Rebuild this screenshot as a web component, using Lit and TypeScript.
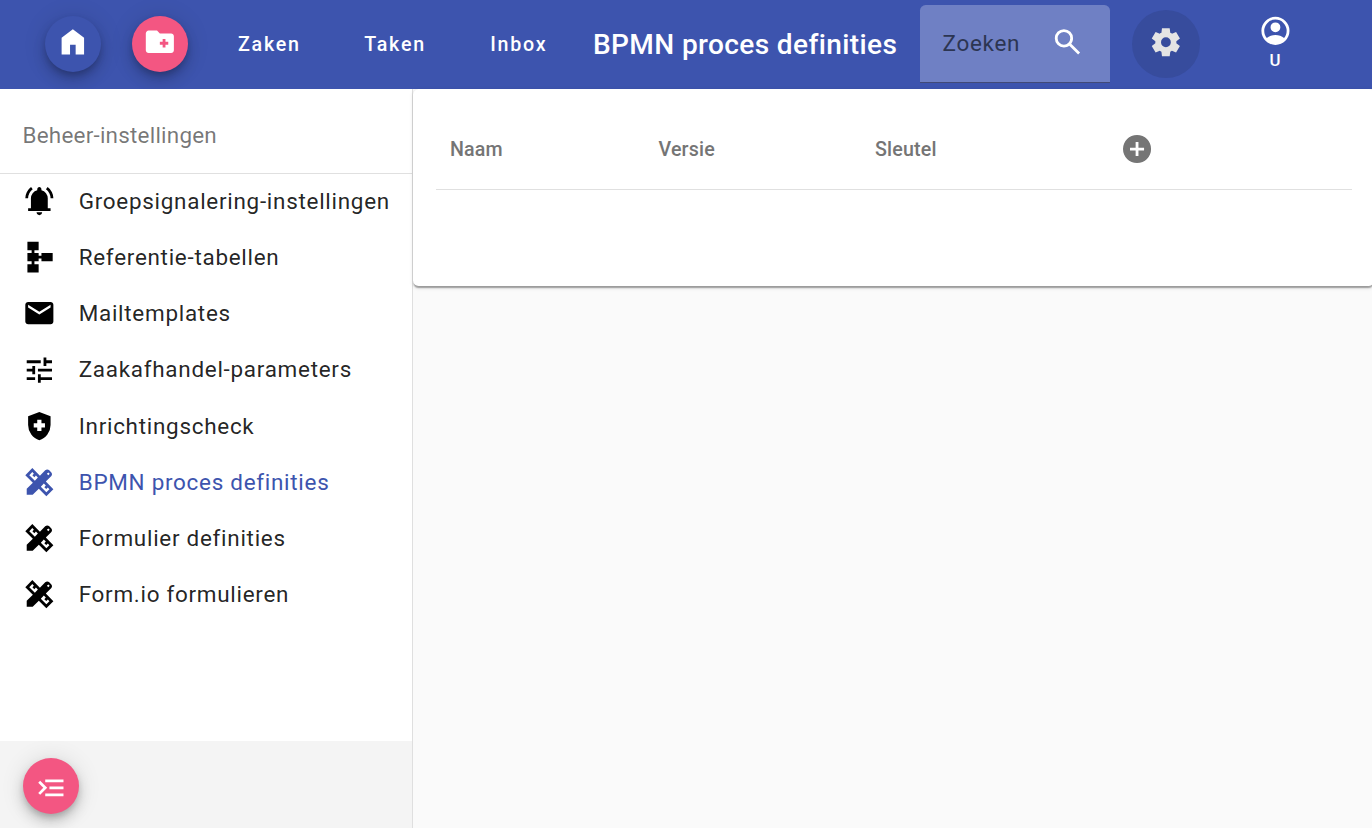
import { LitElement, html, css, svg } from "lit";
import { customElement, property } from "lit/decorators.js";

const ICONS: Record<string, string> = {
  home: "M160-120v-480l320-240 320 240v480H560v-280H400v280H160Z",
  folder:
    "M160-160q-33 0-56.5-23.5T80-240v-480q0-33 23.5-56.5T160-800h240l80 80h320q33 0 56.5 23.5T880-640v400q0 33-23.5 56.5T800-160H160Zm400-160h80v-80h80v-80h-80v-80h-80v80h-80v80h80v80Z",
  search:
    "M784-120 532-372q-30 24-69 38t-83 14q-109 0-184.5-75.5T120-580q0-109 75.5-184.5T380-840q109 0 184.5 75.5T640-580q0 44-14 83t-38 69l252 252-56 56ZM380-400q75 0 127.5-52.5T560-580q0-75-52.5-127.5T380-760q-75 0-127.5 52.5T200-580q0 75 52.5 127.5T380-400Z",
  settings:
    "m370-80-16-128q-13-5-24.5-12T307-235l-119 50L78-375l103-78q-1-7-1-13.5v-27q0-6.5 1-13.5L78-585l110-190 119 50q11-8 23-15t24-12l16-128h220l16 128q13 5 24.5 12t22.5 15l119-50 110 190-103 78q1 7 1 13.5v27q0 6.5-2 13.5l103 78-110 190-118-50q-11 8-23 15t-24 12L590-80H370Zm112-260q58 0 99-41t41-99q0-58-41-99t-99-41q-59 0-99.5 41T342-480q0 58 40.5 99t99.5 41Z",
  account:
    "M234-276q51-39 114-61.5T480-360q69 0 132 22.5T726-276q35-41 54.5-93T800-480q0-133-93.5-226.5T480-800q-133 0-226.5 93.5T160-480q0 59 19.5 111t54.5 93Zm246-164q-59 0-99.5-40.5T340-580q0-59 40.5-99.5T480-720q59 0 99.5 40.5T620-580q0 59-40.5 99.5T480-440Zm0 360q-83 0-156-31.5T197-197q-54-54-85.5-127T80-480q0-83 31.5-156T197-763q54-54 127-85.5T480-880q83 0 156 31.5T763-763q54 54 85.5 127T880-480q0 83-31.5 156T763-197q-54 54-127 85.5T480-80Z",
  bell:
    "M80-560q0-100 44.5-183.5T244-882l47 64q-60 44-95.5 111T160-560H80Zm720 0q0-80-35.5-147T669-818l47-64q75 55 119.5 138.5T880-560h-80ZM160-200v-80h80v-280q0-83 50-147.5T420-792v-28q0-25 17.5-42.5T480-880q25 0 42.5 17.5T540-820v28q80 20 130 84.5T720-560v280h80v80H160ZM480-80q-33 0-56.5-23.5T400-160h160q0 33-23.5 56.5T480-80Z",
  schema:
    "M140-40v-240h120v-80H140v-240h120v-80H140v-240h320v240H340v80h120v80h80v-80h320v240H540v-80h-80v80H340v80h120v240H140Z",
  mail:
    "M160-160q-33 0-56.5-23.5T80-240v-480q0-33 23.5-56.5T160-800h640q33 0 56.5 23.5T880-720v480q0 33-23.5 56.5T800-160H160Zm320-280 320-200v-80L480-520 160-720v80l320 200Z",
  tune:
    "M440-120v-240h80v80h320v80H520v80h-80Zm-320-80v-80h240v80H120Zm160-160v-80H120v-80h160v-80h80v240h-80Zm160-80v-80h400v80H440Zm160-160v-240h80v80h160v80H680v80h-80Zm-480-80v-80h400v80H120Z",
  shield:
    "M420-340h120v-100h100v-120H540v-100H420v100H320v120h100v100Zm60 260q-139-35-229.5-159.5T160-516v-244l320-120 320 120v244q0 152-90.5 276.5T480-80Z",
  design:
    "m352-522 86-87-56-57-44 44-56-56 43-44-45-45-87 87 159 158Zm328 329 87-87-45-45-44 43-56-56 43-44-57-56-86 86 158 159ZM735-678l40-40-40-40-40 40 40 40ZM290-120H120v-170l175-175L80-680l200-200 216 216 151-152q12-12 27-18t31-6q16 0 31 6t27 18l53 54q12 12 18 27t6 31q0 16-6 30.5T816-647L665-495l215 215L680-80 465-295 290-120Z",
  expand:
    "M840-720v80H320v-80h520Zm-664 40 200 200-200 200-56-56 144-144-144-144 56-56Zm664 160v80H440v-80h400Zm0 200v80H320v-80h520Z",
  add:
    "M440-280h80v-160h160v-80H520v-160h-80v160H280v80h160v160Zm40 200q-83 0-156-31.5T197-197q-54-54-85.5-127T80-480q0-83 31.5-156T197-763q54-54 127-85.5T480-880q83 0 156 31.5T763-763q54 54 85.5 127T880-480q0 83-31.5 156T763-197q-54 54-127 85.5T480-80Z",
};

@customElement("ui-icon")
export class UiIcon extends LitElement {
  @property() name = "";
  static styles = css`
    :host { display: block; width: 33.7px; height: 33.7px; flex: none; }
    svg { display: block; width: 100%; height: 100%; fill: currentColor; fill-rule: evenodd; }
  `;
  render() {
    return html`<svg viewBox="0 -960 960 960">${svg`<path d=${ICONS[this.name] ?? ""}></path>`}</svg>`;
  }
}

const MENU = [
  ["bell", "Groepsignalering-instellingen"],
  ["schema", "Referentie-tabellen"],
  ["mail", "Mailtemplates"],
  ["tune", "Zaakafhandel-parameters"],
  ["shield", "Inrichtingscheck"],
  ["design", "BPMN proces definities"],
  ["design", "Formulier definities"],
  ["design", "Form.io formulieren"],
];

@customElement("app-root")
export class AppRoot extends LitElement {
  static styles = css`
    * { box-sizing: border-box; }
    :host {
      display: flex; flex-direction: column; height: 100vh; overflow: hidden;
      font-family: Roboto, "Liberation Sans", sans-serif; background: #fafafa;
      color: rgba(0, 0, 0, 0.87);
    }
    button {
      border: 0; padding: 0; margin: 0; background: none; font: inherit; color: inherit;
    }
    .bar {
      height: 89px; flex: none; display: flex; align-items: center; background: #3d54ae;
      color: #fff; padding-left: 45px; white-space: nowrap;
    }
    .fab {
      width: 56px; height: 56px; border-radius: 50%; flex: none; display: flex;
      justify-content: center; align-items: center; color: #fff; background: #f35682;
      box-shadow: 0 4.2px 7px -1.4px rgba(0, 0, 0, 0.2), 0 8.4px 14px 0 rgba(0, 0, 0, 0.14),
        0 1.4px 25px 0 rgba(0, 0, 0, 0.12);
    }
    .bar .fab { padding-bottom: 4px; margin-bottom: 1px; }
    .home { background: #3d54ae; margin-right: 31px; }
    .nav {
      display: flex; font-size: 19.65px; font-weight: 500; letter-spacing: 1.75px;
      margin-left: 50px; width: 355px;
    }
    .nav .zaken { width: 126.3px; }
    .nav .taken { width: 126px; }
    .title { margin: 0; width: 327px; font-size: 28.07px; font-weight: 500; letter-spacing: 0.37px; }
    .search {
      width: 190px; height: 78px; margin-bottom: 1px; border-radius: 5.6px 5.6px 0 0;
      background: #6f80c4; border-bottom: 1px solid #414a78; display: flex; align-items: center;
      padding: 0 25.5px 2px 22.5px; justify-content: space-between; color: #2c3552;
      font-size: 22.46px; letter-spacing: 0.7px;
    }
    .search ui-icon { color: #fff; margin-bottom: 1px; transform: translateX(-0.4px); }
    .gear {
      width: 68px; height: 68px; border-radius: 50%; background: #374c9d; color: #e4e4e4;
      margin: 0 0 1px 22px; display: flex; align-items: center; justify-content: center;
      padding-bottom: 4px;
    }
    .gear ui-icon { transform: translateY(0.4px); }
    .user {
      margin-left: 58px; width: 34px; display: flex; flex-direction: column; align-items: center;
      font-size: 16.8px; font-weight: 500; line-height: 24px; padding-bottom: 3px;
    }
    .user ui-icon { transform: translateX(0.6px); }
    .body { display: flex; flex: 1; min-height: 0; }
    .side {
      width: 413px; flex: none; border-right: 1px solid #dfdfdf; background: #fff;
      display: flex; flex-direction: column;
    }
    .side h2 {
      margin: 0; height: 85px; flex: none; padding: 8px 0 0 22.5px; display: flex; align-items: center;
      font-size: 22.46px; font-weight: 400; letter-spacing: 0.22px; color: rgba(0, 0, 0, 0.54);
      border-bottom: 1px solid #e0e0e0;
    }
    .menu { list-style: none; margin: -1px 0 0; padding: 0; flex: 1; }
    .item {
      height: 56.14px; display: flex; align-items: center; padding-left: 22px; gap: 23px;
      font-size: 22.46px; letter-spacing: 0.72px; white-space: nowrap;
    }
    .item ui-icon { color: #000; transform: translate(0.5px, 0.3px); }
    .item.active, .item.active ui-icon { color: #3d54ae; }
    .foot { height: 87px; background: #f4f4f4; padding: 17px 0 0 23px; flex: none; }
    .foot .fab { padding-top: 3px; }
    .main { flex: 1; min-width: 0; }
    .card {
      height: 197px; margin-right: -2px; background: #fff; border-radius: 5.6px;
      padding: 22px 22px 0 23px;
      box-shadow: 0 2.8px 1.4px -1.4px rgba(0, 0, 0, 0.2), 0 1.4px 1.4px 0 rgba(0, 0, 0, 0.14),
        0 1.4px 4.2px 0 rgba(0, 0, 0, 0.12);
    }
    .head {
      height: 79px; border-bottom: 1px solid #e0e0e0; display: grid;
      grid-template-columns: 208.5px 216.5px 245px 1fr; align-items: center;
      padding: 0 0 2px 14px; font-size: 19.65px; font-weight: 500; letter-spacing: 0.17px;
      color: #757575;
    }
    .head ui-icon { transform: translate(0.2px, 0.2px); }
  `;

  render() {
    return html`
      <header class="bar">
        <button class="fab home"><ui-icon name="home"></ui-icon></button>
        <button class="fab"><ui-icon name="folder"></ui-icon></button>
        <nav class="nav">
          <span class="zaken">Zaken</span><span class="taken">Taken</span><span>Inbox</span>
        </nav>
        <h1 class="title">BPMN proces definities</h1>
        <div class="search"><span>Zoeken</span><ui-icon name="search"></ui-icon></div>
        <button class="gear"><ui-icon name="settings"></ui-icon></button>
        <button class="user"><ui-icon name="account"></ui-icon><span>U</span></button>
      </header>
      <div class="body">
        <aside class="side">
          <h2>Beheer-instellingen</h2>
          <ul class="menu">
            ${MENU.map(
              ([icon, label], i) => html`<li class="item ${i === 5 ? "active" : ""}">
                <ui-icon name=${icon}></ui-icon><span>${label}</span>
              </li>`
            )}
          </ul>
          <div class="foot"><button class="fab"><ui-icon name="expand"></ui-icon></button></div>
        </aside>
        <main class="main">
          <section class="card">
            <div class="head">
              <span>Naam</span><span>Versie</span><span>Sleutel</span><ui-icon name="add"></ui-icon>
            </div>
          </section>
        </main>
      </div>
    `;
  }
}
